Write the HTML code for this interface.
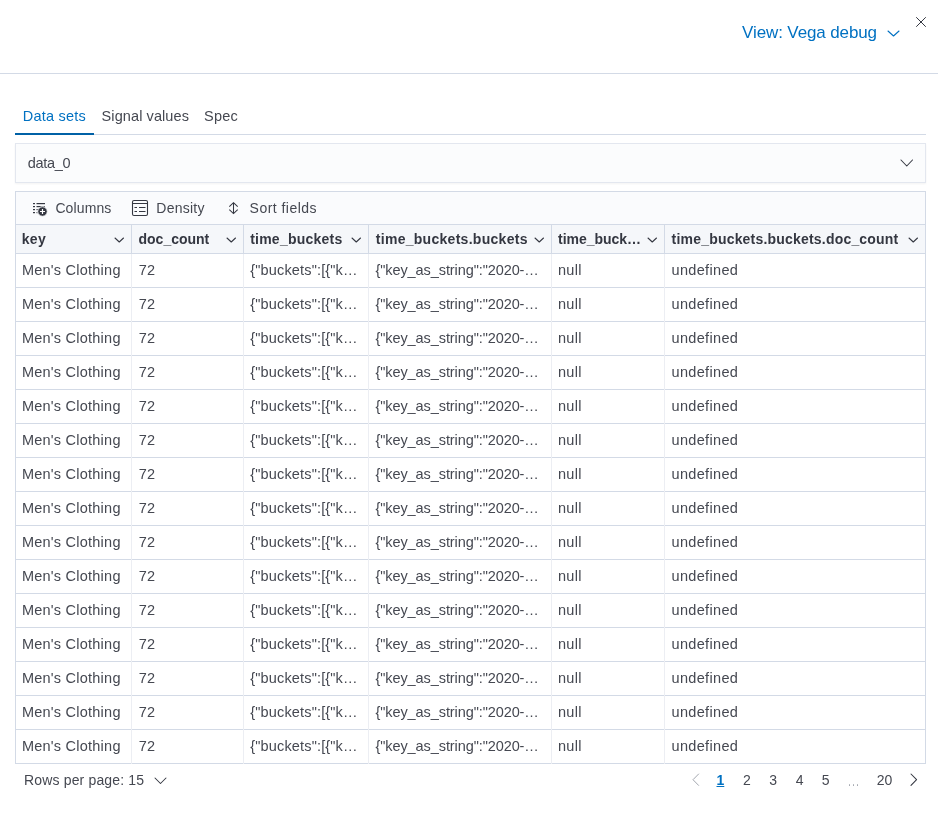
<!DOCTYPE html>
<html>
<head>
<meta charset="utf-8">
<style>
*{box-sizing:border-box;margin:0;padding:0}
html,body{width:938px;height:819px;overflow:hidden;background:#fff}
body{font-family:"Liberation Sans",sans-serif;color:#343741}
#w{position:absolute;left:0;top:0;width:938px;height:819px;will-change:transform}
.a{position:absolute}
.t{position:absolute;white-space:nowrap;line-height:20px}
.r{position:absolute}
</style>
</head>
<body>
<div id="w">
<div class="r" style="left:0px;top:73px;width:938px;height:1px;background:#D3DAE6;"></div>
<div class="t" style="left:742.10px;top:23px;font-size:17px;letter-spacing:-0.120px;color:#0071C2;">View: Vega debug</div>
<svg class="a" style="left:885.5px;top:28.5px" width="15" height="9"><path d="M2 2 L7.5 7 L13 2" fill="none" stroke="#0071C2" stroke-width="1.1" stroke-linecap="round" stroke-linejoin="round"/></svg>
<svg class="a" style="left:914px;top:15px" width="14" height="14"><path d="M2.5 2.5 L11.5 11.5 M11.5 2.5 L2.5 11.5" fill="none" stroke="#343741" stroke-width="1" stroke-linecap="round"/></svg>
<div class="t" style="left:22.70px;top:106px;font-size:14.5px;letter-spacing:0.225px;color:#0071C2;">Data sets</div>
<div class="t" style="left:101.60px;top:106px;font-size:14.5px;letter-spacing:0.091px;color:#454851;">Signal values</div>
<div class="t" style="left:204.00px;top:106px;font-size:14.5px;letter-spacing:0.267px;color:#454851;">Spec</div>
<div class="r" style="left:15px;top:134px;width:911px;height:1px;background:#D3DAE6;"></div>
<div class="r" style="left:15px;top:133px;width:79px;height:2px;background:#0061A6;"></div>
<div class="r" style="left:15px;top:143px;width:911px;height:40px;background:#FBFCFD;border:1px solid #E3E7EF;box-shadow:0 1px 2px rgba(0,0,0,0.05)"></div>
<div class="t" style="left:27.70px;top:153px;font-size:14.5px;letter-spacing:-0.280px;color:#454851;">data_0</div>
<svg class="a" style="left:898.5px;top:158px" width="15.5" height="10"><path d="M2 2 L7.75 8 L13.5 2" fill="none" stroke="#343741" stroke-width="1.05" stroke-linecap="round" stroke-linejoin="round"/></svg>
<div class="r" style="left:15px;top:191px;width:911px;height:573px;background:#fff;border:1px solid #D3DAE6"></div>
<div class="r" style="left:16px;top:192px;width:909px;height:32px;background:#FAFBFD;"></div>
<div class="r" style="left:16px;top:224px;width:909px;height:1px;background:#D3DAE6;"></div>
<div class="r" style="left:16px;top:225px;width:909px;height:28px;background:#F5F7FA;"></div>
<div class="r" style="left:16px;top:253px;width:909px;height:1px;background:#D3DAE6;"></div>
<div class="r" style="left:16px;top:287px;width:909px;height:1px;background:#D3DAE6;"></div>
<div class="r" style="left:16px;top:321px;width:909px;height:1px;background:#D3DAE6;"></div>
<div class="r" style="left:16px;top:355px;width:909px;height:1px;background:#D3DAE6;"></div>
<div class="r" style="left:16px;top:389px;width:909px;height:1px;background:#D3DAE6;"></div>
<div class="r" style="left:16px;top:423px;width:909px;height:1px;background:#D3DAE6;"></div>
<div class="r" style="left:16px;top:457px;width:909px;height:1px;background:#D3DAE6;"></div>
<div class="r" style="left:16px;top:491px;width:909px;height:1px;background:#D3DAE6;"></div>
<div class="r" style="left:16px;top:525px;width:909px;height:1px;background:#D3DAE6;"></div>
<div class="r" style="left:16px;top:559px;width:909px;height:1px;background:#D3DAE6;"></div>
<div class="r" style="left:16px;top:593px;width:909px;height:1px;background:#D3DAE6;"></div>
<div class="r" style="left:16px;top:627px;width:909px;height:1px;background:#D3DAE6;"></div>
<div class="r" style="left:16px;top:661px;width:909px;height:1px;background:#D3DAE6;"></div>
<div class="r" style="left:16px;top:695px;width:909px;height:1px;background:#D3DAE6;"></div>
<div class="r" style="left:16px;top:729px;width:909px;height:1px;background:#D3DAE6;"></div>
<div class="r" style="left:131px;top:225px;width:1px;height:28px;background:#D3DAE6;"></div>
<div class="r" style="left:131px;top:254px;width:1px;height:510px;background:#ECEEF3;"></div>
<div class="r" style="left:243px;top:225px;width:1px;height:28px;background:#D3DAE6;"></div>
<div class="r" style="left:243px;top:254px;width:1px;height:510px;background:#ECEEF3;"></div>
<div class="r" style="left:368px;top:225px;width:1px;height:28px;background:#D3DAE6;"></div>
<div class="r" style="left:368px;top:254px;width:1px;height:510px;background:#ECEEF3;"></div>
<div class="r" style="left:551px;top:225px;width:1px;height:28px;background:#D3DAE6;"></div>
<div class="r" style="left:551px;top:254px;width:1px;height:510px;background:#ECEEF3;"></div>
<div class="r" style="left:664px;top:225px;width:1px;height:28px;background:#D3DAE6;"></div>
<div class="r" style="left:664px;top:254px;width:1px;height:510px;background:#ECEEF3;"></div>
<svg class="a" style="left:32px;top:202px" width="16" height="16" viewBox="0 0 16 16"><g fill="#343741"><rect x="1" y="1" width="2" height="1.2"/><rect x="1" y="4" width="2" height="1.2"/><rect x="1" y="7" width="2" height="1.2"/><rect x="1" y="10" width="2" height="1.2"/><rect x="4.5" y="1" width="8.5" height="1.2"/><rect x="4.5" y="4" width="8.5" height="1.2"/><rect x="4.5" y="7" width="3" height="1.2"/><rect x="4.5" y="10" width="3" height="1.2"/></g><circle cx="10.5" cy="9.5" r="4.8" fill="#343741" stroke="#FAFBFD" stroke-width="1"/><path d="M10.5 7 V12 M8 9.5 H13" stroke="#fff" stroke-width="1.2"/></svg>
<div class="t" style="left:55.40px;top:198px;font-size:14px;letter-spacing:0.116px;color:#454851;">Columns</div>
<svg class="a" style="left:131px;top:199px" width="18" height="18" viewBox="0 0 18 18"><rect x="1.5" y="1.5" width="15" height="15" rx="1.5" fill="none" stroke="#343741" stroke-width="1.1"/><path d="M2 4.5 H16 M3.5 8.5 H6 M8 8.5 H14.5 M3.5 12.5 H6 M8 12.5 H14.5" stroke="#343741" stroke-width="1.1"/></svg>
<div class="t" style="left:156.30px;top:198px;font-size:14px;letter-spacing:0.250px;color:#454851;">Density</div>
<svg class="a" style="left:227px;top:201px" width="12" height="14" viewBox="0 0 12 14"><path d="M2.3 5.6 L6.5 1.6 L10.7 5.6 M2.3 8.6 L6.5 12.6 L10.7 8.6 M6.5 1.6 V12.6" fill="none" stroke="#343741" stroke-width="1.05"/></svg>
<div class="t" style="left:249.60px;top:198px;font-size:14px;letter-spacing:0.470px;color:#454851;">Sort fields</div>
<div class="t" style="left:21.70px;top:229px;font-size:14px;font-weight:bold;letter-spacing:0.350px;color:#343741;">key</div>
<svg class="a" style="left:112.5px;top:236px" width="12.5" height="8"><path d="M2 2 L6.25 6 L10.5 2" fill="none" stroke="#343741" stroke-width="1.05" stroke-linecap="round" stroke-linejoin="round"/></svg>
<div class="t" style="left:138.50px;top:229px;font-size:14px;font-weight:bold;color:#343741;">doc_count</div>
<svg class="a" style="left:224.5px;top:236px" width="12.5" height="8"><path d="M2 2 L6.25 6 L10.5 2" fill="none" stroke="#343741" stroke-width="1.05" stroke-linecap="round" stroke-linejoin="round"/></svg>
<div class="t" style="left:250.20px;top:229px;font-size:14px;font-weight:bold;letter-spacing:0.227px;color:#343741;">time_buckets</div>
<svg class="a" style="left:349.5px;top:236px" width="12.5" height="8"><path d="M2 2 L6.25 6 L10.5 2" fill="none" stroke="#343741" stroke-width="1.05" stroke-linecap="round" stroke-linejoin="round"/></svg>
<div class="t" style="left:375.80px;top:229px;font-size:14px;font-weight:bold;letter-spacing:0.284px;color:#343741;">time_buckets.buckets</div>
<svg class="a" style="left:532.5px;top:236px" width="12.5" height="8"><path d="M2 2 L6.25 6 L10.5 2" fill="none" stroke="#343741" stroke-width="1.05" stroke-linecap="round" stroke-linejoin="round"/></svg>
<div class="t" style="left:558.10px;top:229px;font-size:14px;font-weight:bold;letter-spacing:-0.033px;color:#343741;">time_buck…</div>
<svg class="a" style="left:645.5px;top:236px" width="12.5" height="8"><path d="M2 2 L6.25 6 L10.5 2" fill="none" stroke="#343741" stroke-width="1.05" stroke-linecap="round" stroke-linejoin="round"/></svg>
<div class="t" style="left:671.60px;top:229px;font-size:14px;font-weight:bold;letter-spacing:0.197px;color:#343741;">time_buckets.buckets.doc_count</div>
<svg class="a" style="left:906.5px;top:236px" width="12.5" height="8"><path d="M2 2 L6.25 6 L10.5 2" fill="none" stroke="#343741" stroke-width="1.05" stroke-linecap="round" stroke-linejoin="round"/></svg>
<div class="t" style="left:21.90px;top:260px;font-size:14.5px;letter-spacing:0.239px;color:#454851;">Men's Clothing</div>
<div class="t" style="left:138.70px;top:260px;font-size:14.5px;letter-spacing:0.200px;color:#454851;">72</div>
<div class="t" style="left:250.30px;top:260px;font-size:14.5px;letter-spacing:0.154px;color:#454851;">{&quot;buckets&quot;:[{&quot;k…</div>
<div class="t" style="left:375.50px;top:260px;font-size:14.5px;letter-spacing:-0.087px;color:#454851;">{&quot;key_as_string&quot;:&quot;2020-…</div>
<div class="t" style="left:558.00px;top:260px;font-size:14.5px;letter-spacing:0.267px;color:#454851;">null</div>
<div class="t" style="left:671.50px;top:260px;font-size:14.5px;letter-spacing:0.336px;color:#454851;">undefined</div>
<div class="t" style="left:21.90px;top:294px;font-size:14.5px;letter-spacing:0.239px;color:#454851;">Men's Clothing</div>
<div class="t" style="left:138.70px;top:294px;font-size:14.5px;letter-spacing:0.200px;color:#454851;">72</div>
<div class="t" style="left:250.30px;top:294px;font-size:14.5px;letter-spacing:0.154px;color:#454851;">{&quot;buckets&quot;:[{&quot;k…</div>
<div class="t" style="left:375.50px;top:294px;font-size:14.5px;letter-spacing:-0.087px;color:#454851;">{&quot;key_as_string&quot;:&quot;2020-…</div>
<div class="t" style="left:558.00px;top:294px;font-size:14.5px;letter-spacing:0.267px;color:#454851;">null</div>
<div class="t" style="left:671.50px;top:294px;font-size:14.5px;letter-spacing:0.336px;color:#454851;">undefined</div>
<div class="t" style="left:21.90px;top:328px;font-size:14.5px;letter-spacing:0.239px;color:#454851;">Men's Clothing</div>
<div class="t" style="left:138.70px;top:328px;font-size:14.5px;letter-spacing:0.200px;color:#454851;">72</div>
<div class="t" style="left:250.30px;top:328px;font-size:14.5px;letter-spacing:0.154px;color:#454851;">{&quot;buckets&quot;:[{&quot;k…</div>
<div class="t" style="left:375.50px;top:328px;font-size:14.5px;letter-spacing:-0.087px;color:#454851;">{&quot;key_as_string&quot;:&quot;2020-…</div>
<div class="t" style="left:558.00px;top:328px;font-size:14.5px;letter-spacing:0.267px;color:#454851;">null</div>
<div class="t" style="left:671.50px;top:328px;font-size:14.5px;letter-spacing:0.336px;color:#454851;">undefined</div>
<div class="t" style="left:21.90px;top:362px;font-size:14.5px;letter-spacing:0.239px;color:#454851;">Men's Clothing</div>
<div class="t" style="left:138.70px;top:362px;font-size:14.5px;letter-spacing:0.200px;color:#454851;">72</div>
<div class="t" style="left:250.30px;top:362px;font-size:14.5px;letter-spacing:0.154px;color:#454851;">{&quot;buckets&quot;:[{&quot;k…</div>
<div class="t" style="left:375.50px;top:362px;font-size:14.5px;letter-spacing:-0.087px;color:#454851;">{&quot;key_as_string&quot;:&quot;2020-…</div>
<div class="t" style="left:558.00px;top:362px;font-size:14.5px;letter-spacing:0.267px;color:#454851;">null</div>
<div class="t" style="left:671.50px;top:362px;font-size:14.5px;letter-spacing:0.336px;color:#454851;">undefined</div>
<div class="t" style="left:21.90px;top:396px;font-size:14.5px;letter-spacing:0.239px;color:#454851;">Men's Clothing</div>
<div class="t" style="left:138.70px;top:396px;font-size:14.5px;letter-spacing:0.200px;color:#454851;">72</div>
<div class="t" style="left:250.30px;top:396px;font-size:14.5px;letter-spacing:0.154px;color:#454851;">{&quot;buckets&quot;:[{&quot;k…</div>
<div class="t" style="left:375.50px;top:396px;font-size:14.5px;letter-spacing:-0.087px;color:#454851;">{&quot;key_as_string&quot;:&quot;2020-…</div>
<div class="t" style="left:558.00px;top:396px;font-size:14.5px;letter-spacing:0.267px;color:#454851;">null</div>
<div class="t" style="left:671.50px;top:396px;font-size:14.5px;letter-spacing:0.336px;color:#454851;">undefined</div>
<div class="t" style="left:21.90px;top:430px;font-size:14.5px;letter-spacing:0.239px;color:#454851;">Men's Clothing</div>
<div class="t" style="left:138.70px;top:430px;font-size:14.5px;letter-spacing:0.200px;color:#454851;">72</div>
<div class="t" style="left:250.30px;top:430px;font-size:14.5px;letter-spacing:0.154px;color:#454851;">{&quot;buckets&quot;:[{&quot;k…</div>
<div class="t" style="left:375.50px;top:430px;font-size:14.5px;letter-spacing:-0.087px;color:#454851;">{&quot;key_as_string&quot;:&quot;2020-…</div>
<div class="t" style="left:558.00px;top:430px;font-size:14.5px;letter-spacing:0.267px;color:#454851;">null</div>
<div class="t" style="left:671.50px;top:430px;font-size:14.5px;letter-spacing:0.336px;color:#454851;">undefined</div>
<div class="t" style="left:21.90px;top:464px;font-size:14.5px;letter-spacing:0.239px;color:#454851;">Men's Clothing</div>
<div class="t" style="left:138.70px;top:464px;font-size:14.5px;letter-spacing:0.200px;color:#454851;">72</div>
<div class="t" style="left:250.30px;top:464px;font-size:14.5px;letter-spacing:0.154px;color:#454851;">{&quot;buckets&quot;:[{&quot;k…</div>
<div class="t" style="left:375.50px;top:464px;font-size:14.5px;letter-spacing:-0.087px;color:#454851;">{&quot;key_as_string&quot;:&quot;2020-…</div>
<div class="t" style="left:558.00px;top:464px;font-size:14.5px;letter-spacing:0.267px;color:#454851;">null</div>
<div class="t" style="left:671.50px;top:464px;font-size:14.5px;letter-spacing:0.336px;color:#454851;">undefined</div>
<div class="t" style="left:21.90px;top:498px;font-size:14.5px;letter-spacing:0.239px;color:#454851;">Men's Clothing</div>
<div class="t" style="left:138.70px;top:498px;font-size:14.5px;letter-spacing:0.200px;color:#454851;">72</div>
<div class="t" style="left:250.30px;top:498px;font-size:14.5px;letter-spacing:0.154px;color:#454851;">{&quot;buckets&quot;:[{&quot;k…</div>
<div class="t" style="left:375.50px;top:498px;font-size:14.5px;letter-spacing:-0.087px;color:#454851;">{&quot;key_as_string&quot;:&quot;2020-…</div>
<div class="t" style="left:558.00px;top:498px;font-size:14.5px;letter-spacing:0.267px;color:#454851;">null</div>
<div class="t" style="left:671.50px;top:498px;font-size:14.5px;letter-spacing:0.336px;color:#454851;">undefined</div>
<div class="t" style="left:21.90px;top:532px;font-size:14.5px;letter-spacing:0.239px;color:#454851;">Men's Clothing</div>
<div class="t" style="left:138.70px;top:532px;font-size:14.5px;letter-spacing:0.200px;color:#454851;">72</div>
<div class="t" style="left:250.30px;top:532px;font-size:14.5px;letter-spacing:0.154px;color:#454851;">{&quot;buckets&quot;:[{&quot;k…</div>
<div class="t" style="left:375.50px;top:532px;font-size:14.5px;letter-spacing:-0.087px;color:#454851;">{&quot;key_as_string&quot;:&quot;2020-…</div>
<div class="t" style="left:558.00px;top:532px;font-size:14.5px;letter-spacing:0.267px;color:#454851;">null</div>
<div class="t" style="left:671.50px;top:532px;font-size:14.5px;letter-spacing:0.336px;color:#454851;">undefined</div>
<div class="t" style="left:21.90px;top:566px;font-size:14.5px;letter-spacing:0.239px;color:#454851;">Men's Clothing</div>
<div class="t" style="left:138.70px;top:566px;font-size:14.5px;letter-spacing:0.200px;color:#454851;">72</div>
<div class="t" style="left:250.30px;top:566px;font-size:14.5px;letter-spacing:0.154px;color:#454851;">{&quot;buckets&quot;:[{&quot;k…</div>
<div class="t" style="left:375.50px;top:566px;font-size:14.5px;letter-spacing:-0.087px;color:#454851;">{&quot;key_as_string&quot;:&quot;2020-…</div>
<div class="t" style="left:558.00px;top:566px;font-size:14.5px;letter-spacing:0.267px;color:#454851;">null</div>
<div class="t" style="left:671.50px;top:566px;font-size:14.5px;letter-spacing:0.336px;color:#454851;">undefined</div>
<div class="t" style="left:21.90px;top:600px;font-size:14.5px;letter-spacing:0.239px;color:#454851;">Men's Clothing</div>
<div class="t" style="left:138.70px;top:600px;font-size:14.5px;letter-spacing:0.200px;color:#454851;">72</div>
<div class="t" style="left:250.30px;top:600px;font-size:14.5px;letter-spacing:0.154px;color:#454851;">{&quot;buckets&quot;:[{&quot;k…</div>
<div class="t" style="left:375.50px;top:600px;font-size:14.5px;letter-spacing:-0.087px;color:#454851;">{&quot;key_as_string&quot;:&quot;2020-…</div>
<div class="t" style="left:558.00px;top:600px;font-size:14.5px;letter-spacing:0.267px;color:#454851;">null</div>
<div class="t" style="left:671.50px;top:600px;font-size:14.5px;letter-spacing:0.336px;color:#454851;">undefined</div>
<div class="t" style="left:21.90px;top:634px;font-size:14.5px;letter-spacing:0.239px;color:#454851;">Men's Clothing</div>
<div class="t" style="left:138.70px;top:634px;font-size:14.5px;letter-spacing:0.200px;color:#454851;">72</div>
<div class="t" style="left:250.30px;top:634px;font-size:14.5px;letter-spacing:0.154px;color:#454851;">{&quot;buckets&quot;:[{&quot;k…</div>
<div class="t" style="left:375.50px;top:634px;font-size:14.5px;letter-spacing:-0.087px;color:#454851;">{&quot;key_as_string&quot;:&quot;2020-…</div>
<div class="t" style="left:558.00px;top:634px;font-size:14.5px;letter-spacing:0.267px;color:#454851;">null</div>
<div class="t" style="left:671.50px;top:634px;font-size:14.5px;letter-spacing:0.336px;color:#454851;">undefined</div>
<div class="t" style="left:21.90px;top:668px;font-size:14.5px;letter-spacing:0.239px;color:#454851;">Men's Clothing</div>
<div class="t" style="left:138.70px;top:668px;font-size:14.5px;letter-spacing:0.200px;color:#454851;">72</div>
<div class="t" style="left:250.30px;top:668px;font-size:14.5px;letter-spacing:0.154px;color:#454851;">{&quot;buckets&quot;:[{&quot;k…</div>
<div class="t" style="left:375.50px;top:668px;font-size:14.5px;letter-spacing:-0.087px;color:#454851;">{&quot;key_as_string&quot;:&quot;2020-…</div>
<div class="t" style="left:558.00px;top:668px;font-size:14.5px;letter-spacing:0.267px;color:#454851;">null</div>
<div class="t" style="left:671.50px;top:668px;font-size:14.5px;letter-spacing:0.336px;color:#454851;">undefined</div>
<div class="t" style="left:21.90px;top:702px;font-size:14.5px;letter-spacing:0.239px;color:#454851;">Men's Clothing</div>
<div class="t" style="left:138.70px;top:702px;font-size:14.5px;letter-spacing:0.200px;color:#454851;">72</div>
<div class="t" style="left:250.30px;top:702px;font-size:14.5px;letter-spacing:0.154px;color:#454851;">{&quot;buckets&quot;:[{&quot;k…</div>
<div class="t" style="left:375.50px;top:702px;font-size:14.5px;letter-spacing:-0.087px;color:#454851;">{&quot;key_as_string&quot;:&quot;2020-…</div>
<div class="t" style="left:558.00px;top:702px;font-size:14.5px;letter-spacing:0.267px;color:#454851;">null</div>
<div class="t" style="left:671.50px;top:702px;font-size:14.5px;letter-spacing:0.336px;color:#454851;">undefined</div>
<div class="t" style="left:21.90px;top:736px;font-size:14.5px;letter-spacing:0.239px;color:#454851;">Men's Clothing</div>
<div class="t" style="left:138.70px;top:736px;font-size:14.5px;letter-spacing:0.200px;color:#454851;">72</div>
<div class="t" style="left:250.30px;top:736px;font-size:14.5px;letter-spacing:0.154px;color:#454851;">{&quot;buckets&quot;:[{&quot;k…</div>
<div class="t" style="left:375.50px;top:736px;font-size:14.5px;letter-spacing:-0.087px;color:#454851;">{&quot;key_as_string&quot;:&quot;2020-…</div>
<div class="t" style="left:558.00px;top:736px;font-size:14.5px;letter-spacing:0.267px;color:#454851;">null</div>
<div class="t" style="left:671.50px;top:736px;font-size:14.5px;letter-spacing:0.336px;color:#454851;">undefined</div>
<div class="t" style="left:24.00px;top:770px;font-size:14px;letter-spacing:0.161px;color:#454851;">Rows per page: 15</div>
<svg class="a" style="left:152.5px;top:775.5px" width="15" height="9.5"><path d="M2 2 L7.5 7.5 L13 2" fill="none" stroke="#343741" stroke-width="1.05" stroke-linecap="round" stroke-linejoin="round"/></svg>
<svg class="a" style="left:691.2px;top:772.4px" width="9.6" height="15.4"><path d="M7.6 2 L2 7.7 L7.6 13.4" fill="none" stroke="#A2A6AE" stroke-width="1.0" stroke-linecap="round" stroke-linejoin="round"/></svg>
<div class="t" style="left:716.50px;top:770px;font-size:14px;font-weight:bold;color:#0071C2;text-decoration:underline;text-underline-offset:1px">1</div>
<div class="t" style="left:742.90px;top:770px;font-size:14px;color:#454851;">2</div>
<div class="t" style="left:769.30px;top:770px;font-size:14px;color:#454851;">3</div>
<div class="t" style="left:795.80px;top:770px;font-size:14px;color:#454851;">4</div>
<div class="t" style="left:821.70px;top:770px;font-size:14px;color:#454851;">5</div>
<div class="t" style="left:876.70px;top:770px;font-size:14px;letter-spacing:0.100px;color:#454851;">20</div>
<div class="r" style="left:848.5px;top:784.3px;width:1.8px;height:1.8px;background:#A2A6AE;border-radius:0.5px"></div>
<div class="r" style="left:852.5px;top:784.3px;width:1.8px;height:1.8px;background:#A2A6AE;border-radius:0.5px"></div>
<div class="r" style="left:856.5px;top:784.3px;width:1.8px;height:1.8px;background:#A2A6AE;border-radius:0.5px"></div>
<svg class="a" style="left:909.2px;top:772.4px" width="9.6" height="15.4"><path d="M2 2 L7.6 7.7 L2 13.4" fill="none" stroke="#343741" stroke-width="1.05" stroke-linecap="round" stroke-linejoin="round"/></svg>
</div>
</body>
</html>
